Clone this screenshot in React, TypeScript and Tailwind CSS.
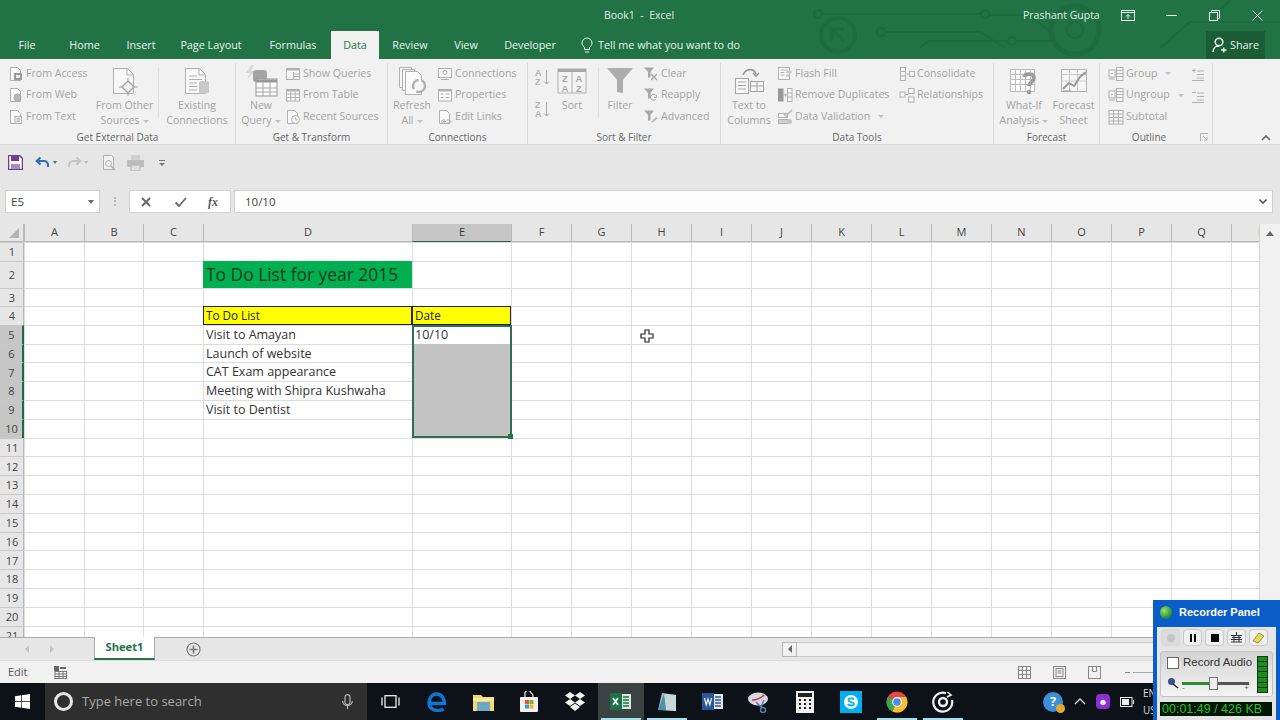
import React from 'react';

const G = '#b0b0b0';

const Ic = ({ s = 16, v = 16, children }: { s?: number; v?: number; children: React.ReactNode }) => (
  <svg width={s} height={s} viewBox={`0 0 ${v} ${v}`} fill="none" stroke={G} strokeWidth={1} className="shrink-0">
    {children}
  </svg>
);

const Doc = () => <path d="M2.5 1.5h7l3 3v10h-10z" fill="#fafafa" />;
const Funnel = () => <path d="M1 1.5h10L7.5 6v5L5 12V6z" fill="#a8a8a8" stroke="none" />;

const icons: Record<string, React.ReactNode> = {
  access: <Ic><Doc /><rect x="6" y="7" width="8" height="7" fill="#999" stroke="none" /><rect x="8" y="9" width="4" height="3" fill="#e8e8e8" stroke="none" /></Ic>,
  web: <Ic><Doc /><circle cx="9.5" cy="10.5" r="3.5" fill="#b8b8b8" stroke="#a4a4a4" /></Ic>,
  text: <Ic><Doc /><rect x="7" y="7.5" width="6.5" height="7" fill="#f4f4f4" /><path d="M8.5 9.5h3.5M8.5 11h3.5M8.5 12.500h3.500" /></Ic>,
  queries: <Ic><rect x="1.5" y="2.5" width="13" height="11" fill="#fafafa" /><path d="M1.5 3.5h13" strokeWidth={2} /><path d="M8.5 6v7M8.5 8h6M8.5 10.5h6" /></Ic>,
  table: <Ic><rect x="1.5" y="2.5" width="13" height="11.5" fill="#fafafa" /><path d="M1.5 3.5h13" strokeWidth={2} /><path d="M1.5 7h13M1.5 10.5h13M5.8 5v9M10.2 5v9" /></Ic>,
  recent: <Ic><Doc /><circle cx="10.5" cy="10.5" r="4" fill="#f4f4f4" /><path d="M10.5 8.5v2.2h2" /></Ic>,
  conn: <Ic><rect x="1.5" y="2.5" width="13" height="9" fill="#fafafa" /><circle cx="8" cy="6.5" r="2" /><path d="M4 13.5h8" /></Ic>,
  props: <Ic><rect x="1.5" y="2.5" width="13" height="11.5" fill="#fafafa" /><path d="M1.5 3.5h13" strokeWidth={2} /><path d="M3.5 7h3M3.5 10.5h3M8.5 7h4M8.5 10.5h4" /></Ic>,
  links: <Ic><Doc /><path d="M6 12.5h3M9.5 11h3a1.5 1.5 0 010 3h-3M8.5 14H6a1.5 1.5 0 010-3h2" /></Ic>,
  clear: <Ic><Funnel /><path d="M8 8l6 6M14 8l-6 6" stroke="#a4a4a4" strokeWidth={1.4} /></Ic>,
  reapply: <Ic><Funnel /><path d="M13.5 10a3 3 0 10-1 2.5M13.5 8v2.5h-2.5" stroke="#a4a4a4" /></Ic>,
  advanced: <Ic><Funnel /><path d="M8 13l5-5 1.5 1.5-5 4z" fill="#b4b4b4" stroke="none" /></Ic>,
  flash: <Ic><rect x="1.5" y="1.5" width="11" height="12" fill="#fafafa" /><path d="M3.5 4h7M3.5 6.5h4M3.5 9h4" /><path d="M9 6h5.5M9 9.5h3" stroke="#c4c4c4" strokeWidth={2} /></Ic>,
  dups: <Ic><rect x="1" y="1.5" width="5.5" height="13" fill="#989898" stroke="none" /><rect x="10.5" y="1.5" width="4.5" height="13" fill="#f6f6f6" /><path d="M10.5 6h4.500M10.5 10h4.500M7 8h3M8.5 6.5v3" /></Ic>,
  valid: <Ic><rect x="1.5" y="4.5" width="9" height="4" fill="#f6f6f6" /><rect x="1.5" y="10.5" width="9" height="4" fill="#d0d0d0" /><path d="M6 4l3 3 6-6" stroke="#b8b8b8" strokeWidth={1.6} /><circle cx="12.5" cy="12.5" r="2.5" fill="#c4c4c4" stroke="none" /></Ic>,
  consol: <Ic><rect x="1.5" y="1.5" width="5" height="13" fill="#f6f6f6" /><path d="M1.5 5.5h5M1.5 10h5M8 8h2" /><rect x="10.5" y="5.5" width="5" height="5" fill="#f6f6f6" /></Ic>,
  rel: <Ic><rect x="1" y="5" width="5" height="5" fill="#f6f6f6" /><rect x="9.5" y="1.5" width="5.5" height="5" fill="#f6f6f6" /><rect x="9.5" y="10" width="5.5" height="5" fill="#f6f6f6" /><path d="M6 7.5h3.5" /></Ic>,
  group: <Ic><rect x="1" y="4" width="6" height="7" fill="#f6f6f6" /><rect x="8.5" y="1.5" width="6.5" height="13" fill="#f6f6f6" /><path d="M8.5 4.5h6.5M8.5 7.5h6.5M8.5 10.5h6.5M3 7.5h2M1 13h6" /></Ic>,
  subtotal: <Ic><rect x="1" y="1.5" width="14" height="13.5" fill="#f6f6f6" /><path d="M5.5 1.5v13.5M10.5 1.5v13.5M1 5h14M1 8.5h14M1 12h14" /></Ic>,
  sortAZ: (
    <svg width="16" height="20" viewBox="0 0 16 20" className="shrink-0">
      <text x="0" y="8.5" fontSize="9" fill="#b0b0b0" fontFamily="Liberation Sans, sans-serif" fontWeight="700">A</text>
      <text x="0" y="17.5" fontSize="9" fill="#b0b0b0" fontFamily="Liberation Sans, sans-serif" fontWeight="700">Z</text>
      <path d="M11.5 3v14M9 14.5l2.5 2.5 2.5-2.5" fill="none" stroke="#a4a4a4" />
    </svg>
  ),
  sortZA: (
    <svg width="16" height="20" viewBox="0 0 16 20" className="shrink-0">
      <text x="0" y="8.5" fontSize="9" fill="#b0b0b0" fontFamily="Liberation Sans, sans-serif" fontWeight="700">Z</text>
      <text x="0" y="17.5" fontSize="9" fill="#b0b0b0" fontFamily="Liberation Sans, sans-serif" fontWeight="700">A</text>
      <path d="M11.5 3v14M9 14.5l2.5 2.5 2.5-2.5" fill="none" stroke="#a4a4a4" />
    </svg>
  ),
};

const big: Record<string, React.ReactNode> = {
  other: <Ic s={30} v={30}><path d="M3.5 2.5h14l6 6v19h-20z" fill="#f8f8f8" /><path d="M17 3v6h6" /><path d="M18 15l6 6-6 6-6-6z" fill="#f0f0f0" stroke="#a4a4a4" strokeWidth={1.4} /><path d="M18 12v4M18 26v4M9 21h4M23 21h5" stroke="#a4a4a4" /></Ic>,
  existing: <Ic s={30} v={30}><path d="M3.5 2.5h14l6 6v19h-20z" fill="#f8f8f8" /><path d="M17 3v6h6M7 10h8M7 13.5h13M7 17h8M7 20.5h8M7 24h8" /><rect x="17" y="15" width="10" height="12.5" rx="2" fill="#c8c8c8" stroke="none" /></Ic>,
  query: <Ic s={34} v={34}><path d="M7 1L2 9h4l-3 6 8-8H7l3-6z" fill="#d8d8d8" stroke="none" /><rect x="9" y="6" width="14" height="12" rx="3" fill="#a4a4a4" stroke="none" /><rect x="12" y="15" width="21" height="17" fill="#fafafa" stroke="#989898" /><path d="M12 17h21" stroke="#989898" strokeWidth={3} /><path d="M12 24h21M12 28h21M19 18v14M26 18v14" stroke="#a8a8a8" /></Ic>,
  refresh: <Ic s={30} v={30}><path d="M2.5 1.5h12v20h-12z" fill="#f8f8f8" /><path d="M5.5 3.5h12v21h-12z" fill="#f8f8f8" /><path d="M8.5 5.5h12l4 4v19h-16z" fill="#fafafa" /><circle cx="22" cy="20" r="6" fill="#f6f6f6" stroke="#b0b0b0" strokeWidth={2.4} strokeDasharray="12 3" /></Ic>,
  sort: (
    <svg width="30" height="26" viewBox="0 0 30 26" className="shrink-0">
      <rect x="1" y="1" width="28" height="24" fill="#f4f4f4" stroke="#b0b0b0" />
      <rect x="1" y="1" width="28" height="3" fill="#a8a8a8" />
      <path d="M15 4v21" stroke="#b0b0b0" />
      <text x="8" y="14" textAnchor="middle" fontSize="9.5" fontWeight="700" fill="#a8a8a8" fontFamily="Liberation Sans, sans-serif">Z</text>
      <text x="8" y="23.5" textAnchor="middle" fontSize="9.5" fontWeight="700" fill="#a8a8a8" fontFamily="Liberation Sans, sans-serif">A</text>
      <text x="22" y="14" textAnchor="middle" fontSize="9.5" fontWeight="700" fill="#a8a8a8" fontFamily="Liberation Sans, sans-serif">A</text>
      <text x="22" y="23.5" textAnchor="middle" fontSize="9.5" fontWeight="700" fill="#a8a8a8" fontFamily="Liberation Sans, sans-serif">Z</text>
    </svg>
  ),
  filter: <Ic s={28} v={28}><path d="M1 1h26L17 13v13l-6-1V13z" fill="#adadad" stroke="none" /></Ic>,
  columns: <Ic s={30} v={30}><rect x="1.5" y="12.5" width="13" height="15" fill="#f8f8f8" stroke="#a4a4a4" /><path d="M4 16h8M4 19.5h8M4 23h8" stroke="#a4a4a4" /><rect x="16.5" y="15.5" width="13" height="10" fill="#f4f4f4" stroke="#a4a4a4" /><path d="M23 15.5v10M16.5 20h13" stroke="#a4a4a4" /><path d="M9 9C12 2 20 2 22 8M19 7l3 3 3-3" stroke="#989898" strokeWidth={1.6} /></Ic>,
  whatif: (
    <svg width="30" height="30" viewBox="0 0 30 30" className="shrink-0">
      <g fill="none" stroke="#bcbcbc">
        <rect x="1.5" y="3.5" width="24" height="22" fill="#fafafa" />
        <path d="M6.5 3.5v22M11.5 3.5v22M16.5 3.5v22M21.5 3.5v22M1.5 8.5h24M1.5 13.5h24M1.5 18.5h24" />
      </g>
      <path d="M15 11c1-4 10-4 10 1 0 4-5 4-5 8" fill="none" stroke="#9c9c9c" strokeWidth={3.6} />
      <circle cx="20" cy="26" r="2.2" fill="#9c9c9c" />
    </svg>
  ),
  forecast: <Ic s={30} v={30}><rect x="2.5" y="3.5" width="25" height="22" fill="#f6f6f6" /><path d="M2.5 8.5h25M10.5 3.5v22M18.5 3.5v22M2.5 15h25" stroke="#c8c8c8" /><path d="M4 23l6-6 5 3 6-9 6-5" stroke="#989898" strokeWidth={2} /><path d="M4 25h8" stroke="#989898" /></Ic>,
};

const Small = ({ icon, label, arrow, className = '' }: { icon: string; label: string; arrow?: boolean; className?: string }) => (
  <div className={`flex h-[21.5px] items-center gap-[2px] text-[#a3a3a3] ${className}`}>
    {icons[icon]}
    <span className="whitespace-nowrap">{label}</span>
    {arrow && <span className="ml-[6px] h-0 w-0 border-x-[3px] border-t-[3px] border-x-transparent border-t-[#c0c0c0]" />}
  </div>
);

const Big = ({ icon, lines, arrow, className = '' }: { icon: string; lines: string[]; arrow?: boolean; className?: string }) => (
  <div className={`flex shrink-0 flex-col items-center text-[#a3a3a3] ${className}`}>
    <div className="flex h-[35px] items-center">{big[icon]}</div>
    {lines.map((l, i) => (
      <div key={l} className="whitespace-nowrap leading-[15px]">
        {l}
        {arrow && i === lines.length - 1 && <span className="ml-[3px] inline-block h-0 w-0 border-x-[3px] border-t-[3px] border-x-transparent border-t-[#c0c0c0] align-middle" />}
      </div>
    ))}
  </div>
);

const Group = ({ label, className, children, launcher }: { label: string; className: string; children: React.ReactNode; launcher?: boolean }) => (
  <div className={`flex shrink-0 flex-col border-r border-[#d8d8d8] ${className}`}>
    <div className="flex h-[69px]">{children}</div>
    <div className={`relative h-[13px] text-center text-[10px] leading-[13px] text-[#666] ${launcher ? 'pr-[14px]' : ''}`}>
      {label}
      {launcher && (
        <svg width="9" height="9" viewBox="0 0 9 9" className="absolute right-[3px] top-[2px]" fill="none" stroke="#b0b0b0">
          <path d="M.5 8V.5H8M3 3l4 4M7 4v3H4" />
        </svg>
      )}
    </div>
  </div>
);

const VSep = ({ className }: { className: string }) => <div className={`h-[50px] w-px shrink-0 self-start bg-[#e0e0e0] ${className}`} />;

const tabs: [string, string][] = [
  ['File', 'w-[54px]'],
  ['Home', 'w-[61px]'],
  ['Insert', 'w-[52px]'],
  ['Page Layout', 'w-[88px]'],
  ['Formulas', 'w-[76px]'],
  ['Data', 'w-[48px]'],
  ['Review', 'w-[62px]'],
  ['View', 'w-[50px]'],
  ['Developer', 'w-[78px]'],
];

const TitleBar = () => (
  <div className="relative h-[31px] shrink-0 text-[10.5px] text-[#dfeee5]">
    <div className="flex h-full items-center">
      <div className="w-[1023px] pl-[255px] text-center">Book1&nbsp; -&nbsp; Excel</div>
      <div className="w-[75px] whitespace-nowrap">Prashant Gupta</div>
      <div className="ml-[23px] flex items-center">
        <svg width="14" height="12" viewBox="0 0 14 12" fill="none" stroke="#e6f0ea"><rect x=".5" y=".5" width="13" height="10" /><path d="M.5 2.5h13M7 9V4.5M5 6.5l2-2 2 2" /></svg>
        <svg width="11" height="11" viewBox="0 0 11 11" className="ml-[31px]" fill="none" stroke="#e6f0ea"><path d="M0 5.5h11" /></svg>
        <svg width="11" height="11" viewBox="0 0 11 11" className="ml-[32px]" fill="none" stroke="#e6f0ea"><rect x=".5" y="2.5" width="8" height="8" /><path d="M2.5 2.5v-2h8v8h-2" /></svg>
        <svg width="11" height="11" viewBox="0 0 11 11" className="ml-[32px]" fill="none" stroke="#e6f0ea"><path d="M.5.5l10 10M10.5.5l-10 10" /></svg>
      </div>
    </div>
  </div>
);

const Circuit = () => (
  <svg width="480" height="59" viewBox="0 0 480 59" className="absolute left-[800px] top-0" fill="none" stroke="#1e6b3e" strokeWidth={2}>
    <circle cx="18" cy="14" r="4" />
    <path d="M22 14h160" />
    <circle cx="185" cy="14" r="4" />
    <path d="M188 15h40l22 16" />
    <circle cx="38" cy="35" r="17" strokeWidth={4} />
    <path d="M32 41V29h12M32 29l12 12" strokeWidth={3} />
    <circle cx="81" cy="32" r="4" />
    <path d="M85 32h95l25 16" />
    <path d="M120 48l8-7h80" />
    <circle cx="212" cy="41" r="4" />
    <path d="M216 41h40" />
    <circle cx="275" cy="30" r="24" strokeWidth={5} />
    <circle cx="275" cy="30" r="8" />
    <path d="M360 48l30-26h90M430 0l-22 22" />
  </svg>
);

const Tabs = () => (
  <div className="flex h-[28px] shrink-0 items-stretch text-[10.8px] text-[#e8f2ec]">
    {tabs.map(([t, w]) => (
      <div key={t} className={`flex items-center justify-center ${w} ${t === 'Data' ? 'bg-[#f1f1f1] text-[#217346]' : ''}`}>{t}</div>
    ))}
    <div className="ml-[11px] flex items-center gap-[4px]">
      <svg width="14" height="16" viewBox="0 0 14 16" fill="none" stroke="#e8f2ec"><path d="M4.5 10.5C3 9 2 8 2 6a5 5 0 0110 0c0 2-1 3-2.500 4.500v2h-5zM5 15h4" /></svg>
      <span>Tell me what you want to do</span>
    </div>
    <div className="ml-auto mr-[15px] flex w-[59px] items-center justify-center gap-[3px] bg-[#1a5c36]">
      <svg width="15" height="16" viewBox="0 0 15 16" fill="none" stroke="#f0f6f2" strokeWidth={1.5}><circle cx="7" cy="5" r="3.800" /><path d="M1 15c0-4 3-6 6-6M9 13h5.500M11.700 10.500v5" /></svg>
      <span>Share</span>
    </div>
  </div>
);

const Ribbon = () => (
  <div className="flex h-[86px] shrink-0 border-b border-[#d6d6d6] bg-[#f1f1f1] pt-[4px] text-[10.6px]">
    <Group label="Get External Data" className="w-[236px]">
      <div className="w-[91px] pl-[8px]">
        <Small icon="access" label="From Access" />
        <Small icon="web" label="From Web" />
        <Small icon="text" label="From Text" />
      </div>
      <Big icon="other" lines={['From Other', 'Sources']} arrow className="w-[67px]" />
      <VSep className="mt-[5px]" />
      <Big icon="existing" lines={['Existing', 'Connections']} className="w-[76px]" />
    </Group>
    <Group label="Get & Transform" className="w-[152px]">
      <Big icon="query" lines={['New', 'Query']} arrow className="ml-[4px] w-[42px]" />
      <div className="ml-[3px]">
        <Small icon="queries" label="Show Queries" />
        <Small icon="table" label="From Table" />
        <Small icon="recent" label="Recent Sources" />
      </div>
    </Group>
    <Group label="Connections" className="w-[140px]">
      <Big icon="refresh" lines={['Refresh', 'All']} arrow className="ml-[2px] w-[44px]" />
      <div className="ml-[3px]">
        <Small icon="conn" label="Connections" />
        <Small icon="props" label="Properties" />
        <Small icon="links" label="Edit Links" />
      </div>
    </Group>
    <Group label="Sort & Filter" className="w-[193px]">
      <div className="ml-[7px] flex w-[16px] flex-col gap-[12px] pt-[4px]">
        {icons.sortAZ}
        {icons.sortZA}
      </div>
      <Big icon="sort" lines={['Sort']} className="ml-[4px] w-[34px]" />
      <div className="w-[9px]" />
      <VSep className="mt-[5px]" />
      <Big icon="filter" lines={['Filter']} className="ml-[3px] w-[36px]" />
      <div className="ml-[5px]">
        <Small icon="clear" label="Clear" />
        <Small icon="reapply" label="Reapply" />
        <Small icon="advanced" label="Advanced" />
      </div>
    </Group>
    <Group label="Data Tools" className="w-[273px]">
      <Big icon="columns" lines={['Text to', 'Columns']} className="ml-[3px] w-[50px]" />
      <div className="ml-[3px] w-[122px] [&>div]:gap-[2px]">
        <Small icon="flash" label="Flash Fill" />
        <Small icon="dups" label="Remove Duplicates" />
        <Small icon="valid" label="Data Validation" arrow />
      </div>
      <div className="[&>div]:gap-[2px]">
        <Small icon="consol" label="Consolidate" />
        <Small icon="rel" label="Relationships" />
      </div>
    </Group>
    <Group label="Forecast" className="w-[106px]">
      <Big icon="whatif" lines={['What-If', 'Analysis']} arrow className="ml-[1px] w-[58px]" />
      <Big icon="forecast" lines={['Forecast', 'Sheet']} className="w-[41px]" />
    </Group>
    <Group label="Outline" launcher className="w-[113px]">
      <div className="ml-[8px] w-[83px]">
        <Small icon="group" label="Group" arrow />
        <Small icon="group" label="Ungroup" arrow />
        <Small icon="subtotal" label="Subtotal" />
      </div>
      <div className="flex flex-col gap-[9px] pt-[5px]">
        <Ic s={13} v={13}><path d="M1 2.500h4M3 .5v4M6 3h7M6 6.500h7M6 10h7M1 12.500h12" /></Ic>
        <Ic s={13} v={13}><path d="M1 2.500h4M6 3h7M6 6.500h7M6 10h7M1 12.500h12" /></Ic>
      </div>
    </Group>
    <div className="flex flex-1 items-end justify-end pb-[2px] pr-[8px]">
      <svg width="12" height="8" viewBox="0 0 12 8" fill="none" stroke="#666" strokeWidth={1.6}><path d="M2 6l4-4 4 4" /></svg>
    </div>
  </div>
);

const QuickAccess = () => (
  <div className="flex h-[44px] shrink-0 bg-[#e6e6e6] pl-[8px] pt-[10px]">
    <div className="flex h-[15px] items-center">
      <svg width="15" height="15" viewBox="0 0 15 15">
        <path d="M.5.5h11l3 3v11H.5z" fill="#fff" stroke="#6b3d96" strokeWidth={1.500} />
        <rect x="3" y="1" width="8" height="5" fill="#6b3d96" />
        <rect x="3" y="9" width="9" height="5" fill="#a78cc0" />
      </svg>
      <svg width="15" height="13" viewBox="0 0 15 13" className="ml-[12px]" fill="none" stroke="#2f6fb5" strokeWidth={2.200}>
        <path d="M5.500 1.500L1.800 5 5.500 8.500M2 5h7a4 4 0 014 4v2" />
      </svg>
      <span className="ml-[3px] h-0 w-0 border-x-[2.500px] border-t-[3px] border-x-transparent border-t-[#666]" />
      <svg width="15" height="13" viewBox="0 0 15 13" className="ml-[10px]" fill="none" stroke="#c4c4c4" strokeWidth={2}>
        <path d="M9.500 1.500L13.200 5 9.500 8.500M13 5H6a4 4 0 00-4 4v2" />
      </svg>
      <span className="ml-[2px] h-0 w-0 border-x-[2.500px] border-t-[3px] border-x-transparent border-t-[#bbb]" />
      <svg width="15" height="16" viewBox="0 0 15 16" className="ml-[14px]" fill="none" stroke="#b0b0b0">
        <path d="M1.500.5h8l2 2v12h-10z" fill="#f2f2f2" />
        <circle cx="6.500" cy="8.500" r="3" />
        <path d="M9 11l4 4" strokeWidth={1.600} />
      </svg>
      <svg width="17" height="16" viewBox="0 0 17 16" className="ml-[10px]" fill="#bcbcbc">
        <rect x="4" y="0" width="9" height="6" fill="#cfcfcf" />
        <rect x="0" y="5" width="17" height="7" />
        <rect x="4" y="10" width="9" height="6" fill="#e0e0e0" stroke="#b4b4b4" />
      </svg>
      <svg width="8" height="8" viewBox="0 0 8 8" className="ml-[14px]" fill="#777">
        <rect x="1" y="1" width="6" height="1" />
        <path d="M1 4h6L4 7z" />
      </svg>
    </div>
  </div>
);

const FormulaBar = () => (
  <div className="flex h-[25px] shrink-0 bg-[#e6e6e6] pb-px pl-[5px] pr-[7px] pt-px text-[11.5px] text-[#444]">
    <div className="flex w-[95px] items-center justify-between border border-[#d0d0d0] bg-white pl-[5px] pr-[5px]">
      <span>E5</span>
      <span className="h-0 w-0 border-x-[3.500px] border-t-[4px] border-x-transparent border-t-[#666]" />
    </div>
    <div className="flex w-[29px] items-center justify-center">
      <span className="h-[9px] border-l-2 border-dotted border-[#bbb]" />
    </div>
    <div className="flex w-[102px] items-center justify-between border border-[#d0d0d0] bg-white pl-[10px] pr-[12px]">
      <svg width="12" height="12" viewBox="0 0 12 12" fill="none" stroke="#666" strokeWidth={1.800}><path d="M2 2l8 8M10 2l-8 8" /></svg>
      <svg width="13" height="12" viewBox="0 0 13 12" fill="none" stroke="#666" strokeWidth={1.800}><path d="M1.500 6.500l3.500 3.500 7-8" /></svg>
      <span className="font-['Liberation_Serif',serif] text-[12px] font-bold italic text-[#555]">fx</span>
    </div>
    <div className="ml-[3px] flex flex-1 items-center justify-between border border-[#d0d0d0] bg-[#fdfdfd] pl-[10px] pr-[4px]">
      <span className="pt-px">10/10</span>
      <svg width="10" height="7" viewBox="0 0 10 7" fill="none" stroke="#555" strokeWidth={1.600}><path d="M1.500 1.500L5 5l3.500-3.500" /></svg>
    </div>
  </div>
);

const cols = ['A', 'B', 'C', 'D', 'E', 'F', 'G', 'H', 'I', 'J', 'K', 'L', 'M', 'N', 'O', 'P', 'Q', 'R'];
const rows = Array.from({ length: 21 }, (_, i) => i + 1);

const content: Record<string, string> = {
  D4: 'To Do List',
  E4: 'Date',
  D5: 'Visit to Amayan',
  E5: '10/10',
  D6: 'Launch of website',
  D7: 'CAT Exam appearance',
  D8: 'Meeting with Shipra Kushwaha',
  D9: 'Visit to Dentist',
};

const cellClass = (ref: string, r: number) => {
  if (ref === 'D2') return 'bg-[#00b050] text-[17.4px] text-[#0b3a1c] pl-[3px]';
  if (ref === 'D4' || ref === 'E4') return 'bg-[#ffff00] border-y-[1.500px] border-x border-[#222] text-[#222] text-[11.7px] pl-[2px] pt-px';
  if (ref[0] === 'E' && r >= 6 && r <= 10) return 'bg-[#c2c2c2] border-[#c2c2c2]';
  return 'border-l border-t border-[#dcdcdc] text-[12.5px] pl-[2px] pt-px';
};

const Sheet = () => (
  <div className="flex min-h-0 flex-1 bg-white">
    <div className="relative w-[1259px] shrink-0 overflow-hidden">
      <div className="grid w-[1291px] grid-cols-[24px_60px_59px_60px_209px_99px_60px_60px_60px_60px_60px_60px_60px_60px_60px_60px_60px_60px_60px] grid-rows-[18px_19px_27px_18px_repeat(18,18.8px)] font-['Open_Sans',sans-serif] text-[#333]">
        <div className="relative border-b border-r border-[#b8b8b8] bg-[#e6e6e6]">
          <span className="absolute bottom-[3px] right-[4px] h-0 w-0 border-b-[10px] border-l-[10px] border-b-[#b4b4b4] border-l-transparent" />
        </div>
        {cols.map((c) => (
          <div key={c} className={`flex items-center justify-center border-b border-l border-[#b8b8b8] text-[11px] ${c === 'E' ? 'bg-[#c6c6c6] border-b-[#1f6b42]' : 'bg-[#e6e6e6] text-[#444]'}`}>{c}</div>
        ))}
        {rows.map((r) => (
          <React.Fragment key={r}>
            <div className={`flex items-center justify-center border-t border-[#c8c8c8] pl-px pt-px text-[11px] ${r >= 5 && r <= 10 ? 'border-r-2 border-r-[#1f6b42] bg-[#c6c6c6] text-[#444]' : 'border-r border-r-[#b8b8b8] bg-[#e6e6e6] text-[#444]'}`}>{r}</div>
            {cols.map((c) => {
              const ref = `${c}${r}`;
              return (
                <div key={ref} className={`flex items-center overflow-visible whitespace-nowrap ${cellClass(ref, r)}`}>
                  {ref === 'D2' ? 'To Do List for year 2015' : content[ref]}
                </div>
              );
            })}
          </React.Fragment>
        ))}
      </div>
      <div className="absolute left-[412px] top-[101px] h-[113px] w-[100px] border-2 border-[#2e7052]">
        <span className="absolute -bottom-[3px] -right-[3px] h-[5px] w-[5px] bg-[#217346]" />
      </div>
      <svg width="14" height="14" viewBox="0 0 14 14" className="absolute left-[640px] top-[105px]">
        <path d="M5 1h4v4h4v4H9v4H5V9H1V5h4z" fill="#fff" stroke="#222" strokeWidth={1.200} />
      </svg>
    </div>
    <div className="flex flex-1 flex-col items-center border-l border-[#d4d4d4] bg-[#f1f1f1]">
      <div className="flex h-[18px] w-full items-center justify-center">
        <span className="h-0 w-0 border-x-[4px] border-b-[5px] border-x-transparent border-b-[#666]" />
      </div>
    </div>
  </div>
);

const SheetTabs = () => (
  <div className="flex h-[23px] shrink-0 items-stretch border-t border-[#ababab] bg-[#e6e6e6]">
    <div className="flex w-[94px] items-center gap-[21px] pl-[25px]">
      <span className="h-0 w-0 border-y-[4px] border-r-[4px] border-y-transparent border-r-[#c4c4c4]" />
      <span className="h-0 w-0 border-y-[4px] border-l-[4px] border-y-transparent border-l-[#c4c4c4]" />
    </div>
    <div className="-mt-px flex w-[61px] items-center justify-center border-x border-b-2 border-[#ababab] border-b-[#217346] border-t-0 bg-white text-[11.2px] font-bold text-[#217346]">Sheet1</div>
    <div className="ml-[31px] flex items-center">
      <svg width="15" height="15" viewBox="0 0 15 15" fill="none" stroke="#777"><circle cx="7.500" cy="7.500" r="6.500" strokeWidth={1.200} /><path d="M7.500 3.500v8M3.500 7.500h8" strokeWidth={1.600} /></svg>
    </div>
    <div className="ml-[581px] flex flex-1 items-center">
      <div className="flex h-[15px] w-[15px] items-center justify-center border border-[#b8b8b8] bg-[#f1f1f1]">
        <span className="h-0 w-0 border-y-[4px] border-r-[4px] border-y-transparent border-r-[#666]" />
      </div>
      <div className="h-[15px] flex-1 border-y border-[#c8c8c8] bg-[#f1f1f1]" />
    </div>
  </div>
);

const StatusBar = () => (
  <div className="flex h-[23px] shrink-0 items-center border-t border-[#dcdcdc] bg-[#f1f1f1] pl-[8px] text-[11px] text-[#555]">
    <span>Edit</span>
    <svg width="13" height="13" viewBox="0 0 13 13" className="ml-[26px]">
      <rect x="0" y="0" width="5" height="5" fill="#666" />
      <rect x="6" y="1" width="6" height="2" fill="#666" />
      <rect x="1" y="5.500" width="11.500" height="7" fill="#f8f8f8" stroke="#777" />
      <path d="M1 8h12M1 10.500h12M5 6v7M9 6v7" stroke="#777" />
    </svg>
    <div className="ml-[951px] flex items-center gap-[22px]">
      <svg width="13" height="13" viewBox="0 0 13 13" fill="none" stroke="#888"><rect x=".5" y=".5" width="12" height="12" /><path d="M4.500.5v12M8.500.5v12M.5 4.500h12M.5 8.500h12" /></svg>
      <svg width="13" height="13" viewBox="0 0 13 13" fill="none" stroke="#888"><rect x=".5" y=".5" width="12" height="12" /><rect x="3" y="2.500" width="7" height="8" /><path d="M4.500 5h4M4.500 7h4" /></svg>
      <svg width="13" height="13" viewBox="0 0 13 13" fill="none" stroke="#888"><rect x=".5" y=".5" width="12" height="12" /><path d="M4.500.5v5h4v-5" /></svg>
      <span className="ml-[2px] flex items-center"><span className="h-px w-[5px] bg-[#888]" /><span className="ml-[3px] h-px w-[30px] bg-[#aaa]" /></span>
    </div>
  </div>
);

const appIcons: React.ReactNode[] = [
  <svg key="edge" width="20" height="20" viewBox="0 0 20 20" fill="none" stroke="#0b78d7" strokeWidth={3.400}><path d="M2 11.500h15.500C17.500 6 14 2 9.500 2 5 2 2 6.500 2 11c0 5 4.500 7.500 8.500 7.500 2.500 0 4.500-.7 6-1.700" /></svg>,
  <svg key="folder" width="21" height="18" viewBox="0 0 21 18"><path d="M0 2h8l2 2h11v14H0z" fill="#f3d774" /><rect x="4" y="9" width="13" height="9" fill="#6ea8c6" /><rect x="0" y="5" width="21" height="3" fill="#fbe99c" /></svg>,
  <svg key="store" width="20" height="21" viewBox="0 0 20 21"><path d="M6 6V3a3 3 0 016-1 3 3 0 012 3v1" fill="none" stroke="#eee" strokeWidth={1.200} /><rect x="1" y="6" width="18" height="15" rx="1" fill="#f4f4f4" /><rect x="6" y="9" width="4" height="4" fill="#e8572c" /><rect x="10.500" y="9" width="4" height="4" fill="#75b82c" /><rect x="6" y="13.500" width="4" height="4" fill="#2d9fe0" /><rect x="10.500" y="13.500" width="4" height="4" fill="#f7b90f" /></svg>,
  <svg key="dropbox" width="22" height="20" viewBox="0 0 22 20" fill="#f2f2f2"><path d="M6 0l5 3.500L6 7 1 3.500zM16 0l5 3.500L16 7l-5-3.500zM6 7l5 3.500L6 14l-5-3.500zM16 7l5 3.500L16 14l-5-3.500zM6 15l5-3.500 5 3.500-5 4z" /></svg>,
  <svg key="excel" width="22" height="19" viewBox="0 0 22 19"><rect x="11" y="2" width="10" height="15" fill="#d8e8dc" /><path d="M13 5h6M13 8h6M13 11h6M13 14h6" stroke="#1e7145" strokeWidth={1.500} /><rect x="0" y="1" width="12" height="17" fill="#1e7145" /><path d="M3 6l5 7M8 6l-5 7" stroke="#fff" strokeWidth={1.600} /></svg>,
  <svg key="photo" width="22" height="22" viewBox="0 0 22 22"><path d="M6 2l14 2v16L2 19z" fill="#9cc4cc" /><path d="M8 3l12 1v16l-10-1z" fill="#c8d8da" /><path d="M2 19l6-16 2 16z" fill="#4e8ea0" /></svg>,
  <svg key="word" width="22" height="19" viewBox="0 0 22 19"><rect x="11" y="2" width="10" height="15" fill="#e4e8f2" /><path d="M13 5h6M13 8h6M13 11h6M13 14h6" stroke="#2b579a" strokeWidth={1.500} /><rect x="0" y="1" width="12" height="17" fill="#2b579a" /><path d="M2.500 6l1.800 7L6 7l1.800 6 1.700-7" fill="none" stroke="#fff" strokeWidth={1.100} /></svg>,
  <svg key="snip" width="22" height="22" viewBox="0 0 22 22"><ellipse cx="10" cy="8" rx="10" ry="6.500" fill="#d8d8e2" /><path d="M4 9c5 0 9-2 12-5" stroke="#c03a4a" strokeWidth={1.500} fill="none" /><path d="M8 11l5 5M16 9l-3 7" stroke="#5a7fa8" strokeWidth={1.500} /><circle cx="15" cy="19" r="2.500" fill="none" stroke="#5a7fa8" strokeWidth={1.500} /></svg>,
  <svg key="calc" width="18" height="22" viewBox="0 0 18 22"><rect x="0" y="0" width="18" height="22" fill="#f2f2f2" /><rect x="2" y="2" width="14" height="4" fill="#222" /><path d="M3 9h2M8 9h2M13 9h2M3 13h2M8 13h2M13 13h2M3 17h2M8 17h2M13 17h2" stroke="#222" strokeWidth={2} /></svg>,
  <div key="skype" className="flex h-[22px] w-[22px] items-center justify-center bg-[#00aff0]"><svg width="16" height="16" viewBox="0 0 16 16"><circle cx="8" cy="8" r="7" fill="#fff" /><path d="M11 5.500C10 4 5.500 4 5.500 6.300 5.500 8.500 11 7.500 11 10c0 2-5 2-6.200 0" fill="none" stroke="#00aff0" strokeWidth={1.800} /></svg></div>,
  <svg key="chrome" width="22" height="22" viewBox="0 0 22 22"><circle cx="11" cy="11" r="10.500" fill="#e8483d" /><path d="M11 11L1.800 6A10.500 10.500 0 006.500 20.500z" fill="#34a853" /><path d="M11 11l-4.500 9.500A10.500 10.500 0 0021.500 11 10.500 10.500 0 0020 6H11z" fill="#fbc02d" /><circle cx="11" cy="11" r="5" fill="#fff" /><circle cx="11" cy="11" r="3.800" fill="#4a8df0" /></svg>,
  <svg key="ring" width="22" height="22" viewBox="0 0 22 22" fill="none" stroke="#f0f0f0"><path d="M14 2.200A9.500 9.500 0 1020 9" strokeWidth={2.200} /><circle cx="11" cy="11" r="4" strokeWidth={2.400} /><path d="M15.500 1l3.500 3-4 2" strokeWidth={1.600} /></svg>,
];

const Taskbar = () => (
  <div className="flex h-[37px] shrink-0 bg-[#0d1219] text-[#bdbdbd]">
    <div className="flex w-[45px] items-center justify-center">
      <svg width="15" height="15" viewBox="0 0 15 15" fill="#fff"><path d="M0 2.200l6.300-.9V7H0zM7 1.200L15 0v7H7zM0 7.800h6.300v5.900L0 12.800zM7 7.800h8V15l-8-1.200z" /></svg>
    </div>
    <div className="flex w-[322px] items-center bg-[#2f2f2f] pl-[9px]">
      <span className="h-[19px] w-[19px] rounded-full border-[3px] border-[#e6e6e6]" />
      <span className="ml-[9px] font-['Open_Sans',sans-serif] text-[13px] text-[#a8a8a8]">Type here to search</span>
      <svg width="11" height="16" viewBox="0 0 11 16" className="ml-auto mr-[14px]" fill="none" stroke="#b4b4b4" strokeWidth={1.200}><rect x="3" y=".7" width="5" height="10" rx="2.500" /><path d="M.7 7c0 6 9.600 6 9.600 0M5.500 12v3.300" /></svg>
    </div>
    <div className="flex w-[47px] items-center justify-center pr-[1px]">
      <svg width="19" height="13" viewBox="0 0 19 13" fill="none" stroke="#eee" strokeWidth={1.300}><rect x="4" y=".7" width="11" height="11.600" /><path d="M1 2.500v8M18 2.500v8" /></svg>
    </div>
    {appIcons.map((ic, i) => (
      <div key={i} className={`relative flex w-[46px] shrink-0 items-center justify-center ${i === 4 ? 'bg-[#3b4242]' : ''}`}>
        {ic}
        {(i === 4 || i === 5 || i === 10 || i === 11) && <span className="absolute bottom-0 left-[3px] right-[3px] h-[2px] bg-[#a9dcec]" />}
      </div>
    ))}
    <div className="ml-[77px] flex items-center">
      <div className="relative flex h-[20px] w-[20px] items-center justify-center rounded-full bg-[#3b8fd8] text-[13px] font-bold text-white">
        ?
        <span className="absolute -bottom-[1px] -right-[2px] h-[9px] w-[9px] rounded-full bg-[#e0a82e]" />
      </div>
      <svg width="12" height="7" viewBox="0 0 12 7" className="ml-[11px]" fill="none" stroke="#ddd" strokeWidth={1.300}><path d="M1 6l5-5 5 5" /></svg>
      <div className="ml-[10px] flex h-[15px] w-[14px] items-center justify-center rounded-sm bg-[#8a30d0] text-[9px] leading-none text-white">☻</div>
      <svg width="14" height="10" viewBox="0 0 14 10" className="ml-[10px]" fill="none" stroke="#eee"><rect x=".5" y=".5" width="11.500" height="9" /><rect x="2" y="2" width="7" height="6" fill="#eee" stroke="none" /><path d="M13.500 3v4" /></svg>
      <div className="ml-[9px] text-[10px] leading-[17px] text-[#ddd]">EN<br />US</div>
    </div>
  </div>
);

const RecorderPanel = () => (
  <div className="absolute left-[1153px] top-[600px] flex h-[120px] w-[127px] flex-col bg-[#0a5cc9] pl-[4px] pr-[4px] font-['Liberation_Sans',sans-serif]">
    <div className="flex h-[25px] shrink-0 items-center gap-[7px] pl-[3px] text-[11px] font-bold text-white">
      <span className="h-[13px] w-[12px] rounded-full bg-[radial-gradient(circle_at_35%_35%,#9fe36b,#2c9a3a_60%,#0a4fa8)]" />
      <span>Recorder Panel</span>
    </div>
    <div className="mt-[2px] flex flex-1 flex-col bg-[#e4e4e4] px-[3px] pt-px">
      <div className="flex h-[19px] shrink-0 items-center gap-[3px] pl-[1px]">
        <div className="flex h-[17px] w-[19px] items-center justify-center rounded-sm border border-[#d8d8d8] bg-[#dcdcdc]"><span className="h-[8px] w-[8px] rounded-full bg-[#c6c6c6]" /></div>
        <div className="flex h-[17px] w-[19px] items-center justify-center gap-[2px] rounded-sm border border-[#c8c8c8] bg-[#f0f0f0]"><span className="h-[8px] w-[2px] bg-black" /><span className="h-[8px] w-[2px] bg-black" /></div>
        <div className="flex h-[17px] w-[19px] items-center justify-center rounded-sm border border-[#c8c8c8] bg-[#f0f0f0]"><span className="h-[8px] w-[8px] bg-black" /></div>
        <div className="flex h-[17px] w-[19px] items-center justify-center rounded-sm border border-[#c8c8c8] bg-[#f0f0f0]"><svg width="13" height="11" viewBox="0 0 13 11" fill="none" stroke="#333"><path d="M6.500 0v3M1 3.500h11M2 5.500h9M1 7.500h11M1 10h11M4 3.500v6.500M9 3.500v6.500" /></svg></div>
        <div className="flex h-[17px] w-[19px] items-center justify-center rounded-sm border border-[#c8c8c8] bg-[#f0f0f0]"><svg width="13" height="12" viewBox="0 0 13 12"><path d="M1 9l6-8 5 3-6 7z" fill="#e8df3a" stroke="#666" strokeWidth={0.700} /></svg></div>
      </div>
      <div className="mt-[4px] flex h-[46px] shrink-0 rounded-[3px] border border-[#c4c4c4] bg-gradient-to-b from-[#d4d4d4] to-[#f4f4f4] pl-[6px] pr-[4px] pt-[2px]">
        <div className="flex-1">
          <div className="flex items-center gap-[4px] whitespace-nowrap text-[11.5px] text-[#333]">
            <span className="h-[12px] w-[12px] shrink-0 border border-[#666] bg-white" />
            <span>Record Audio</span>
          </div>
          <div className="mt-[6px] flex items-center">
            <svg width="12" height="12" viewBox="0 0 12 12"><circle cx="4.500" cy="4.500" r="3.500" fill="#3a4f90" /><path d="M6 7l5 4" stroke="#222" strokeWidth={1.500} /></svg>
            <div className="relative ml-[3px] flex h-[3px] w-[67px] bg-[#555]">
              <span className="h-full w-[30px] bg-[#2d8a2d]" />
              <span className="absolute -top-[5px] left-[27px] h-[13px] w-[9px] border border-[#777] bg-[#eee]" />
              <span className="absolute left-0 top-[2px] text-[8px] leading-[8px] text-[#555]">-</span>
              <span className="absolute right-0 top-[2px] text-[8px] leading-[8px] text-[#555]">+</span>
            </div>
          </div>
        </div>
        <div className="mt-[2px] flex h-[37px] w-[11px] shrink-0 flex-col gap-px bg-[#0c3d0c] px-[1px] py-[1px]">
          {[0, 1, 2, 3, 4, 5, 6].map((i) => <span key={i} className="flex-1 bg-[#1f8a1f]" />)}
        </div>
      </div>
      <div className="mt-[5px] flex h-[14px] w-[112px] shrink-0 items-center whitespace-nowrap bg-[#041404] pl-[2px] text-[12.5px] text-[#1ec81e]">00:01:49 / 426 KB</div>
    </div>
  </div>
);

export default function App() {
  return (
    <div className="relative flex h-[720px] w-[1280px] flex-col overflow-hidden bg-white font-['Open_Sans',sans-serif] text-[11.5px]">
      <div className="relative h-[59px] shrink-0 bg-[#217346]">
        <Circuit />
        <div className="relative">
          <TitleBar />
          <Tabs />
        </div>
      </div>
      <Ribbon />
      <QuickAccess />
      <FormulaBar />
      <div className="h-[10px] shrink-0 bg-[#e6e6e6]" />
      <Sheet />
      <SheetTabs />
      <StatusBar />
      <Taskbar />
      <RecorderPanel />
    </div>
  );
}
